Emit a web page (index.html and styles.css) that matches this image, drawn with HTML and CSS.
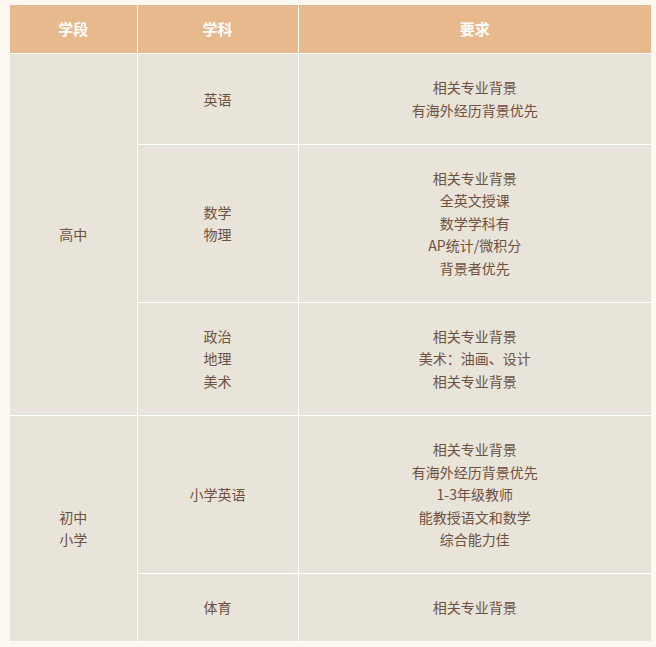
FILE: index.html
```html
<!DOCTYPE html>
<html lang="zh-CN">
<head>
<meta charset="utf-8">
<link rel="stylesheet" href="styles.css">
</head>
<body>
<div class="wrap">
<table class="grid">
  <colgroup>
    <col class="c1"><col class="c2"><col class="c3">
  </colgroup>
  <thead>
    <tr><th>学段</th><th>学科</th><th>要求</th></tr>
  </thead>
  <tbody>
    <tr>
      <td rowspan="3">高中</td>
      <td>英语</td>
      <td>相关专业背景<br>有海外经历背景优先</td>
    </tr>
    <tr>
      <td>数学<br>物理</td>
      <td>相关专业背景<br>全英文授课<br>数学学科有<br>AP统计/微积分<br>背景者优先</td>
    </tr>
    <tr>
      <td>政治<br>地理<br>美术</td>
      <td>相关专业背景<br>美术：油画、设计<br>相关专业背景</td>
    </tr>
    <tr>
      <td rowspan="2">初中<br>小学</td>
      <td>小学英语</td>
      <td>相关专业背景<br>有海外经历背景优先<br>1-3年级教师<br>能教授语文和数学<br>综合能力佳</td>
    </tr>
    <tr>
      <td>体育</td>
      <td>相关专业背景</td>
    </tr>
  </tbody>
</table>
</div>
</body>
</html>
```

FILE: styles.css
```css
html, body {
  margin: 0;
  padding: 0;
  background: #fdf8f0;
}
body {
  font-family: "Noto Sans CJK SC", "Microsoft YaHei", sans-serif;
  font-size: 14px;
  color: #6e5140;
}
.wrap {
  padding: 5px 5px 7px 10px;
}
.grid {
  width: 641px;
  border-collapse: collapse;
  border-style: hidden;
  table-layout: fixed;
}
.c1 { width: 127px; }
.c2 { width: 161px; }
.c3 { width: 353px; }
.grid th, .grid td {
  border: 1px solid #ffffff;
  text-align: center;
  vertical-align: middle;
  padding: 0;
}
.grid th {
  background: #e9b98e;
  color: #ffffff;
  font-weight: bold;
  font-size: 15px;
  height: 48px;
  line-height: 20px;
}
.grid td {
  background: #e8e4da;
  padding: 22.3px 0;
  line-height: 22.5px;
}
```
